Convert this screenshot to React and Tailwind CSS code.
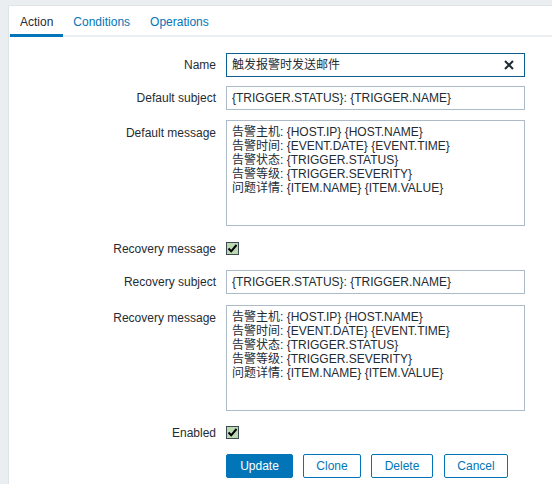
import { useState } from 'react'

const FONT = "font-['Liberation_Sans','Noto_Sans_CJK_SC',sans-serif]"

const MESSAGE = [
  '告警主机: {HOST.IP} {HOST.NAME}',
  '告警时间: {EVENT.DATE} {EVENT.TIME}',
  '告警状态: {TRIGGER.STATUS}',
  '告警等级: {TRIGGER.SEVERITY}',
  '问题详情: {ITEM.NAME} {ITEM.VALUE}',
]

function Check() {
  return (
    <span className="w-[13px] h-[13px] border border-[#3c4a52] bg-[#bcd9b1] flex items-center justify-center">
      <svg width="11" height="11" viewBox="0 0 11 11">
        <path d="M1.5 5.5 L4.2 8.3 L9.5 2" fill="none" stroke="#000" strokeWidth="2" />
      </svg>
    </span>
  )
}

function Row({ label, top, children, className = '' }) {
  return (
    <div className={`flex ${top ? 'items-start' : 'items-center'} ${className}`}>
      <div className={`w-[217px] pr-[10px] text-right text-[#1f2c33] ${top ? 'pt-[4px]' : ''}`}>{label}</div>
      {children}
    </div>
  )
}

function Message() {
  return (
    <div className="w-[299px] h-[106px] border border-[#acbbc7] bg-white px-[5px] pt-[4px] leading-[14px] text-[#1f2c33]">
      {MESSAGE.map(l => <div key={l} className="whitespace-nowrap">{l}</div>)}
    </div>
  )
}

export default function App() {
  const [tab, setTab] = useState('Action')
  const inputCls = 'w-[299px] h-[24px] border border-[#acbbc7] bg-white px-[5px] flex items-center text-[#1f2c33]'
  const btn = 'h-[24px] rounded-[2px] border border-[#0275b8] text-center'

  return (
    <div className={`w-[552px] h-[484px] bg-[#ebeef0] pt-[5px] pl-[8px] text-[12px] ${FONT} overflow-hidden`}>
      <div className="h-full bg-white border-t border-l border-[#dfe4e7]">
        {/* Tabs */}
        <div className="flex h-[31px] border-b-2 border-[#ebeef0] pl-[1px]">
          {['Action', 'Conditions', 'Operations'].map(t => (
            <button key={t} onClick={() => setTab(t)}
              className={`px-[10px] pt-[4px] h-[31px] mb-[-2px] border-b-[3px] ${tab === t ? 'border-[#0275b8] text-[#1f2c33]' : 'border-transparent text-[#0275b8]'}`}>
              {t}
            </button>
          ))}
        </div>

        {/* Form */}
        <div className="flex flex-col pt-[16px]">
          <Row label="Name">
            <div className="w-[299px] h-[24px] border border-[#0d5e91] bg-white pl-[5px] pr-[10px] flex items-center justify-between text-[#1f2c33]">
              <span>触发报警时发送邮件</span>
              <svg width="10" height="10" viewBox="0 0 10 10">
                <path d="M1 1 L9 9 M9 1 L1 9" stroke="#1f2c33" strokeWidth="2" />
              </svg>
            </div>
          </Row>
          <Row label="Default subject" className="mt-[9px]">
            <div className={inputCls}>{'{TRIGGER.STATUS}: {TRIGGER.NAME}'}</div>
          </Row>
          <Row label="Default message" top className="mt-[10px]">
            <Message />
          </Row>
          <Row label="Recovery message" className="mt-[16px] h-[13px]">
            <Check />
          </Row>
          <Row label="Recovery subject" className="mt-[15px]">
            <div className={inputCls}>{'{TRIGGER.STATUS}: {TRIGGER.NAME}'}</div>
          </Row>
          <Row label="Recovery message" top className="mt-[11px]">
            <Message />
          </Row>
          <Row label="Enabled" className="mt-[15px] h-[13px]">
            <Check />
          </Row>
          <Row label="" className="mt-[15px]">
            <div className="flex gap-[10px]">
              <button className={`${btn} w-[67px] bg-[#0275b8] text-white`}>Update</button>
              <button className={`${btn} w-[58px] bg-white text-[#0275b8]`}>Clone</button>
              <button className={`${btn} w-[62px] bg-white text-[#0275b8]`}>Delete</button>
              <button className={`${btn} w-[64px] ml-[1px] bg-white text-[#0275b8]`}>Cancel</button>
            </div>
          </Row>
        </div>
      </div>
    </div>
  )
}
